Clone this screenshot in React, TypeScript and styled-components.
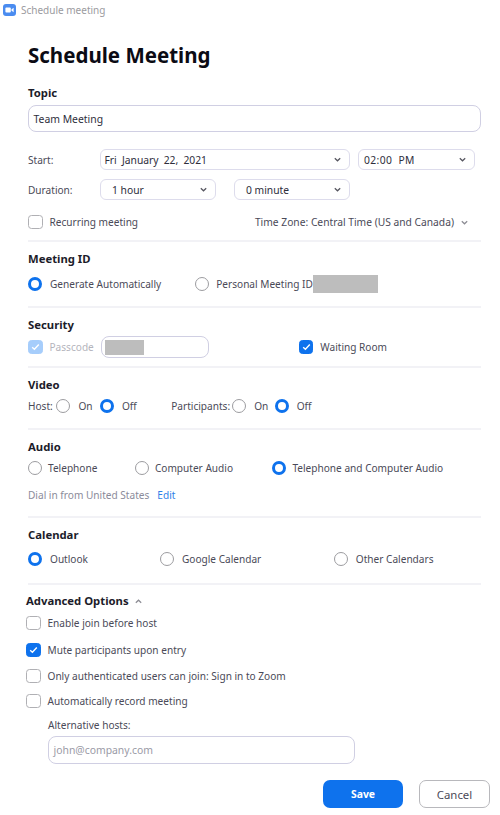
import React from "react";
import styled, { createGlobalStyle } from "styled-components";

const Global = createGlobalStyle`
  html, body { margin: 0; padding: 0; background: #fff; }
  body { font-family: "Noto Sans", "Open Sans", Arial, sans-serif; font-size: 10.1px; color: #3d3d4e; }
`;

const Page = styled.div`
  width: 500px;
  height: 815px;
  overflow: hidden;
  display: flex;
  flex-direction: column;
`;
const TitleBar = styled.div`
  height: 20px;
  display: flex;
  align-items: center;
  gap: 5px;
  padding-left: 3px;
  font-size: 10px;
  color: #9b9ba0;
`;
const Content = styled.div`
  display: flex;
  flex-direction: column;
  padding: 0 19px 0 28px;
`;
const Heading = styled.h1`
  margin: 21px 0 0;
  height: 28px;
  line-height: 28px;
  font-size: 20.5px;
  font-weight: 700;
  color: #0b0b14;
`;
const Section = styled.section<{ $h: number }>`
  height: ${(p) => p.$h}px;
  flex-shrink: 0;
  box-sizing: border-box;
  display: flex;
  flex-direction: column;
`;
const Divided = styled(Section)`
  border-top: 2px solid #f2f2f6;
  padding-top: 9px;
`;
const Title = styled.div<{ $top?: number }>`
  font-size: 11.3px;
  line-height: 16px;
  height: 16px;
  margin-top: ${(p) => p.$top ?? 0}px;
  font-weight: 700;
  color: #1c1c2a;
`;
const TextField = styled.div<{ $w?: number; $h: number; $top?: number; $left?: number; $pad?: number }>`
  width: ${(p) => (p.$w ? `${p.$w}px` : "auto")};
  height: ${(p) => p.$h}px;
  margin-top: ${(p) => p.$top ?? 0}px;
  margin-left: ${(p) => p.$left ?? 0}px;
  flex-shrink: 0;
  box-sizing: border-box;
  border: 1.5px solid #d0cfe3;
  border-radius: 8px;
  display: flex;
  align-items: center;
  padding-left: ${(p) => p.$pad ?? 4.5}px;
  background: #fff;
`;
const FieldText = styled.span`
  font-size: 10.4px;
  color: #2e2e3c;
`;
const Placeholder = styled.span`
  font-size: 10.4px;
  color: #9a9aa6;
`;
const Row = styled.div<{ $h?: number; $top?: number }>`
  display: flex;
  align-items: center;
  height: ${(p) => p.$h ?? 16}px;
  margin-top: ${(p) => p.$top ?? 0}px;
  flex-shrink: 0;
`;
const FieldLabel = styled.span`
  width: 72px;
  flex-shrink: 0;
  color: #4a4a58;
`;
const SelectBox = styled.div<{ $w: number; $ml?: number; $inset?: number; $words?: number }>`
  width: ${(p) => p.$w}px;
  margin-left: ${(p) => p.$ml ?? 0}px;
  height: 21px;
  box-sizing: border-box;
  border: 1.5px solid #dddcec;
  border-radius: 6px;
  display: flex;
  align-items: center;
  justify-content: space-between;
  padding: 0 8px 0 ${(p) => p.$inset ?? 3.5}px;
  font-size: 10.3px;
  color: #2e2e3c;
  word-spacing: ${(p) => p.$words ?? 2.5}px;
`;
const TimeValue = styled.span`
  letter-spacing: 0.4px;
  word-spacing: 3px;
`;
const ChevronSvg = styled.svg<{ $soft?: boolean }>`
  width: 7px;
  height: 5px;
  flex-shrink: 0;
  fill: none;
  stroke: ${(p) => (p.$soft ? "#8c8c94" : "#55555f")};
  stroke-width: 1.2;
`;
const Chevron = ({ up, soft }: { up?: boolean; soft?: boolean }) => (
  <ChevronSvg viewBox="0 0 7 5" $soft={soft}>
    <path d={up ? "M.8 3.8 3.5 1.2 6.2 3.8" : "M.8 1.2 3.5 3.8 6.2 1.2"} />
  </ChevronSvg>
);
const CheckBox = styled.span<{ $on?: boolean; $dim?: boolean }>`
  width: 14.5px;
  height: 14.5px;
  flex-shrink: 0;
  box-sizing: border-box;
  border-radius: 3.5px;
  border: 1.5px solid ${(p) => (p.$dim ? "#a6cdfb" : p.$on ? "#0e72ed" : "#b0b0b4")};
  background: ${(p) => (p.$dim ? "#a6cdfb" : p.$on ? "#0e72ed" : "#fff")};
  display: flex;
  align-items: center;
  justify-content: center;
`;
const TickSvg = styled.svg`
  width: 9px;
  height: 8px;
  fill: none;
  stroke: #fff;
  stroke-width: 1.4;
`;
const Check = ({ on, dim }: { on?: boolean; dim?: boolean }) => (
  <CheckBox $on={on} $dim={dim}>
    {(on || dim) && (
      <TickSvg viewBox="0 0 9 8">
        <path d="M1.2 4.2 3.4 6.2 7.8 1.6" />
      </TickSvg>
    )}
  </CheckBox>
);
const Radio = styled.span<{ $on?: boolean }>`
  width: 14px;
  height: 14px;
  flex-shrink: 0;
  box-sizing: border-box;
  border-radius: 50%;
  border: ${(p) => (p.$on ? "3.6px solid #0e72ed" : "1.2px solid #9c9ca0")};
  background: #fff;
`;
const Option = styled.span<{ $gap?: number; $x?: number }>`
  display: inline-flex;
  align-items: center;
  gap: ${(p) => p.$gap ?? 8}px;
  margin-left: ${(p) => p.$x ?? 0}px;
  color: #4a4a58;
  white-space: nowrap;
`;
const Muted = styled.span`
  color: #b4b4bc;
`;
const Redacted = styled.span<{ $w: number; $h: number; $ml?: number }>`
  display: block;
  width: ${(p) => p.$w}px;
  height: ${(p) => p.$h}px;
  margin-left: ${(p) => p.$ml ?? 0}px;
  background: #bdbdbd;
`;
const TimeZone = styled.span`
  margin-left: auto;
  margin-right: 13px;
  display: inline-flex;
  align-items: center;
  gap: 7px;
  font-size: 10.25px;
  color: #4a4a58;
`;
const Small = styled.span<{ $x?: number }>`
  margin-left: ${(p) => p.$x ?? 0}px;
  color: #4a4a58;
  white-space: nowrap;
`;
const DialText = styled.span`
  color: #8b8b9a;
`;
const EditLink = styled.a`
  color: #2d7fe8;
  margin-left: 8px;
`;
const AdvancedTitle = styled(Title)`
  margin-left: -2px;
  display: flex;
  align-items: center;
  gap: 6px;
`;
const Advanced = styled.div`
  margin-left: -2px;
  display: flex;
  flex-direction: column;
`;
const HostLabel = styled.div`
  margin: 8px 0 0 22px;
  height: 16px;
  line-height: 16px;
  color: #4a4a58;
`;
const Footer = styled.div`
  margin-top: 16px;
  display: flex;
  justify-content: flex-end;
  gap: 16px;
  margin-right: -9px;
`;
const SaveButton = styled.button`
  width: 80px;
  height: 28px;
  border: 0;
  border-radius: 7px;
  background: #0e72ed;
  color: #fff;
  font: 700 10.4px "Noto Sans", sans-serif;
  padding: 0;
`;
const CancelButton = styled.button`
  width: 71px;
  height: 28px;
  box-sizing: border-box;
  border: 1.5px solid #b8b8bc;
  border-radius: 7px;
  background: #fff;
  color: #4a4a58;
  font: 400 11.4px "Noto Sans", sans-serif;
  padding: 0;
`;

const ZoomIcon = () => (
  <svg width="13" height="12" viewBox="0 0 13 12">
    <rect width="13" height="12" rx="3" fill="#4a8cf0" />
    <rect x="2.4" y="3.6" width="5.4" height="4.8" rx="1" fill="#fff" />
    <path d="M8.4 5.4 10.6 3.8V8.2L8.4 6.6Z" fill="#fff" />
  </svg>
);

export default function App() {
  return (
    <Page>
      <Global />
      <TitleBar>
        <ZoomIcon />
        Schedule meeting
      </TitleBar>
      <Content>
        <Heading>Schedule Meeting</Heading>
        <Section $h={171}>
          <Title $top={16}>Topic</Title>
          <TextField $h={27} $top={4}>
            <FieldText>Team Meeting</FieldText>
          </TextField>
          <Row $h={21} $top={17}>
            <FieldLabel>Start:</FieldLabel>
            <SelectBox $w={250}>
              Fri January 22, 2021
              <Chevron />
            </SelectBox>
            <SelectBox $w={116.5} $ml={8} $inset={5}>
              <TimeValue>02:00 PM</TimeValue>
              <Chevron />
            </SelectBox>
          </Row>
          <Row $h={21} $top={9}>
            <FieldLabel>Duration:</FieldLabel>
            <SelectBox $w={116} $inset={11} $words={0}>
              1 hour
              <Chevron />
            </SelectBox>
            <SelectBox $w={116} $ml={18} $inset={11} $words={0}>
              0 minute
              <Chevron />
            </SelectBox>
          </Row>
          <Row $top={14}>
            <Option $gap={7}>
              <Check />
              Recurring meeting
            </Option>
            <TimeZone>
              Time Zone: Central Time (US and Canada)
              <Chevron soft />
            </TimeZone>
          </Row>
        </Section>
        <Divided $h={66}>
          <Title>Meeting ID</Title>
          <Row $top={9}>
            <Option>
              <Radio $on />
              Generate Automatically
            </Option>
            <Option $x={34} $gap={7}>
              <Radio />
              Personal Meeting ID
            </Option>
            <Redacted $w={65} $h={18} />
          </Row>
        </Divided>
        <Divided $h={60}>
          <Title>Security</Title>
          <Row $h={22} $top={3}>
            <Option $gap={7}>
              <Check dim />
              <Muted>Passcode</Muted>
            </Option>
            <TextField $w={108} $h={22} $left={7} $pad={3.5}>
              <Redacted $w={39} $h={15} />
            </TextField>
            <Option $x={90} $gap={7}>
              <Check on />
              Waiting Room
            </Option>
          </Row>
        </Divided>
        <Divided $h={62}>
          <Title>Video</Title>
          <Row $top={5}>
            <Small>Host:</Small>
            <Option $x={3.7}>
              <Radio />
              On
            </Option>
            <Option $x={7.4}>
              <Radio $on />
              Off
            </Option>
            <Small $x={34.4}>Participants:</Small>
            <Option $x={2}>
              <Radio />
              On
            </Option>
            <Option $x={6.4}>
              <Radio $on />
              Off
            </Option>
          </Row>
        </Divided>
        <Divided $h={88}>
          <Title>Audio</Title>
          <Row $top={5}>
            <Option $gap={6}>
              <Radio />
              Telephone
            </Option>
            <Option $x={37.5} $gap={6}>
              <Radio />
              Computer Audio
            </Option>
            <Option $x={39.4} $gap={6}>
              <Radio $on />
              Telephone and Computer Audio
            </Option>
          </Row>
          <Row $top={11}>
            <DialText>Dial in from United States</DialText>
            <EditLink>Edit</EditLink>
          </Row>
        </Divided>
        <Divided $h={67}>
          <Title>Calendar</Title>
          <Row $top={8}>
            <Option>
              <Radio $on />
              Outlook
            </Option>
            <Option $x={72}>
              <Radio />
              Google Calendar
            </Option>
            <Option $x={72.5}>
              <Radio />
              Other Calendars
            </Option>
          </Row>
        </Divided>
        <Divided $h={232}>
          <AdvancedTitle $top={-1}>
            Advanced Options
            <Chevron up soft />
          </AdvancedTitle>
          <Advanced>
            <Row $top={6}>
              <Option $gap={7}>
                <Check />
                Enable join before host
              </Option>
            </Row>
            <Row $top={11}>
              <Option $gap={7}>
                <Check on />
                Mute participants upon entry
              </Option>
            </Row>
            <Row $top={10}>
              <Option $gap={7}>
                <Check />
                Only authenticated users can join: Sign in to Zoom
              </Option>
            </Row>
            <Row $top={9}>
              <Option $gap={7}>
                <Check />
                Automatically record meeting
              </Option>
            </Row>
            <HostLabel>Alternative hosts:</HostLabel>
            <TextField $w={307} $h={28} $top={3} $left={22}>
              <Placeholder>john@company.com</Placeholder>
            </TextField>
            <Footer>
              <SaveButton>Save</SaveButton>
              <CancelButton>Cancel</CancelButton>
            </Footer>
          </Advanced>
        </Divided>
      </Content>
    </Page>
  );
}
